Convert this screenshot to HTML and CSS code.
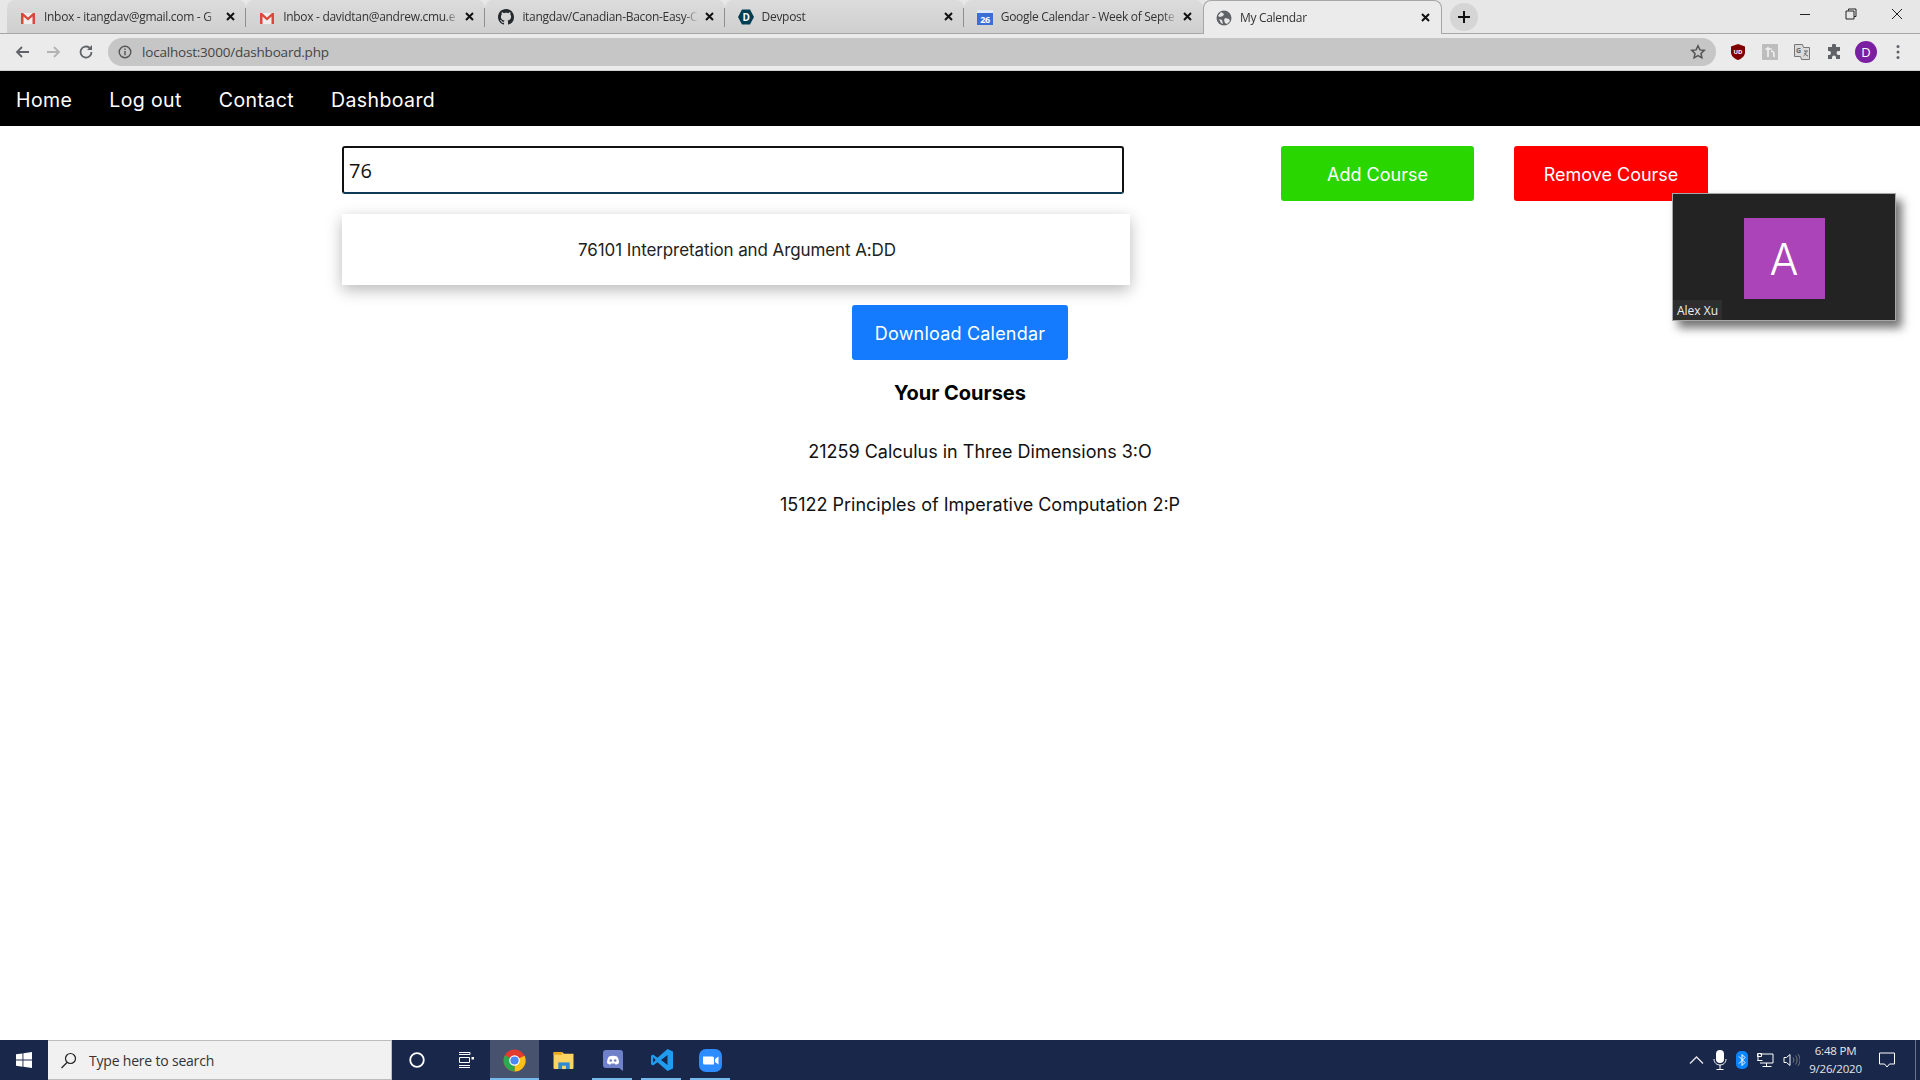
FILE: index.html
```html
<!DOCTYPE html>
<html lang="en">
<head>
<meta charset="utf-8">
<title>My Calendar</title>
<link rel="stylesheet" href="styles.css">
</head>
<body>
<header class="chrome">
  <div class="tabstrip">
    <div class="tab">
      <svg class="fav" viewBox="0 -1 16 16"><path d="M1 3h14v11H1z" fill="#eee"/><path d="M1 14V3h2l5 4.500L13 3h2v11h-2.500V6.500L8 10.500 3.500 6.500V14z" fill="#d9483b"/></svg>
      <span class="tab-title">Inbox - itangdav@gmail.com - G</span>
      <svg class="tab-x" viewBox="0 0 9 9"><path d="M1 1l7 7M8 1L1 8"/></svg>
    </div>
    <div class="tab">
      <svg class="fav" viewBox="0 -1 16 16"><path d="M1 3h14v11H1z" fill="#eee"/><path d="M1 14V3h2l5 4.500L13 3h2v11h-2.500V6.500L8 10.500 3.500 6.500V14z" fill="#d9483b"/></svg>
      <span class="tab-title">Inbox - davidtan@andrew.cmu.e</span>
      <svg class="tab-x" viewBox="0 0 9 9"><path d="M1 1l7 7M8 1L1 8"/></svg>
    </div>
    <div class="tab">
      <svg class="fav" viewBox="0 0 16 16"><path fill="#24292e" d="M8 0C3.58 0 0 3.58 0 8c0 3.54 2.29 6.53 5.47 7.59.4.07.55-.17.55-.38 0-.19-.01-.82-.01-1.49-2.01.37-2.53-.49-2.69-.94-.09-.23-.48-.94-.82-1.13-.28-.15-.68-.52-.01-.53.63-.01 1.08.58 1.23.82.72 1.21 1.87.87 2.33.66.07-.52.28-.87.51-1.07-1.78-.2-3.64-.89-3.64-3.95 0-.87.31-1.59.82-2.15-.08-.2-.36-1.02.08-2.12 0 0 .67-.21 2.2.82.64-.18 1.32-.27 2-.27.68 0 1.36.09 2 .27 1.53-1.04 2.2-.82 2.2-.82.44 1.1.16 1.92.08 2.12.51.56.82 1.27.82 2.15 0 3.07-1.87 3.75-3.65 3.95.29.25.54.73.54 1.48 0 1.07-.01 1.93-.01 2.2 0 .21.15.46.55.38A8.013 8.013 0 0016 8c0-4.42-3.58-8-8-8z"/></svg>
      <span class="tab-title">itangdav/Canadian-Bacon-Easy-C</span>
      <svg class="tab-x" viewBox="0 0 9 9"><path d="M1 1l7 7M8 1L1 8"/></svg>
    </div>
    <div class="tab">
      <svg class="fav" viewBox="0 0 16 16"><path d="M4 .5h8L16 8l-4 7.500H4L0 8z" fill="#003e54"/><text x="8" y="11.500" class="fav-text" text-anchor="middle">D</text></svg>
      <span class="tab-title">Devpost</span>
      <svg class="tab-x" viewBox="0 0 9 9"><path d="M1 1l7 7M8 1L1 8"/></svg>
    </div>
    <div class="tab tab-last">
      <svg class="fav" viewBox="0 0 16 16"><path d="M0 1h16v15H0z" fill="#3b6fd6"/><path d="M0 1h16v3H0z" fill="#dfe8f8"/><text x="8" y="14" class="fav-num" text-anchor="middle">26</text></svg>
      <span class="tab-title">Google Calendar - Week of Septe</span>
      <svg class="tab-x" viewBox="0 0 9 9"><path d="M1 1l7 7M8 1L1 8"/></svg>
    </div>
    <div class="tab tab-active">
      <svg class="fav" viewBox="0 0 16 16"><circle cx="8" cy="8" r="7.500" fill="#5f6368"/><path d="M5 2l3 2-1 2-3 1-2-1zM9 8l4 1 1 2-3 3-2-1-1-3zM3 9l3 1 1 4-2-1z" fill="#e8e8e8"/></svg>
      <span class="tab-title">My Calendar</span>
      <svg class="tab-x" viewBox="0 0 9 9"><path d="M1 1l7 7M8 1L1 8"/></svg>
    </div>
    <div class="newtab"><svg width="14" height="14" viewBox="0 0 14 14"><path d="M7 1v12M1 7h12" stroke="#111" stroke-width="2"/></svg></div>
    <div class="winctl">
      <svg class="winbtn" viewBox="0 0 12 12"><path d="M1 6.500h10" stroke="#222"/></svg>
      <svg class="winbtn" viewBox="0 0 12 12"><path d="M3.500 2.500V1H11v7.500H9M1 3h8v8H1z" stroke="#222" fill="none"/></svg>
      <svg class="winbtn" viewBox="0 0 12 12"><path d="M1 1l10 10M11 1L1 11" stroke="#222"/></svg>
    </div>
  </div>
  <div class="toolbar">
    <svg class="navicon" viewBox="0 0 16 16"><path d="M15 8H3M8 3L3 8l5 5" fill="none" stroke="#5f6368" stroke-width="1.800"/></svg>
    <svg class="navicon" viewBox="0 0 16 16"><path d="M1 8h12M8 3l5 5-5 5" fill="none" stroke="#b3b3b3" stroke-width="1.800"/></svg>
    <svg class="navicon" viewBox="0 0 16 16"><path d="M13.500 8A5.500 5.500 0 1 1 11.500 3.800" fill="none" stroke="#5f6368" stroke-width="1.800"/><path d="M14 1v5H9z" fill="#5f6368"/></svg>
    <div class="omnibox">
      <svg class="info" viewBox="0 0 14 14"><circle cx="7" cy="7" r="5.800" fill="none" stroke="#555" stroke-width="1.400"/><path d="M7 6v4.200M7 3.500v1.400" stroke="#555" stroke-width="1.400"/></svg>
      <span class="url">localhost:3000/dashboard.php</span>
      <svg class="star" viewBox="0 0 16 16"><path d="M8 1.800l1.900 4.100 4.400.5-3.300 3 .9 4.400L8 11.600l-3.900 2.200.9-4.400-3.300-3 4.400-.5z" fill="none" stroke="#555" stroke-width="1.500"/></svg>
    </div>
    <div class="exts">
      <svg class="ext" viewBox="0 0 16 16"><path d="M8 0l7 2.500V8c0 4-3 6.500-7 8-4-1.500-7-4-7-8V2.500z" fill="#800000"/><text x="8" y="9.500" class="ext-ub" text-anchor="middle">UD</text></svg>
      <svg class="ext" viewBox="0 0 16 16"><path d="M1 0h14a1 1 0 0 1 1 1v14a1 1 0 0 1-1 1H1a1 1 0 0 1-1-1V1a1 1 0 0 1 1-1z" fill="#bdbdbd"/><path d="M6 3v10M3.500 5h6M9 7c3 0 3 2 3 6" fill="none" stroke="#f3f3f3" stroke-width="1.500"/></svg>
      <svg class="ext" viewBox="0 0 16 16"><path d="M.5.500h8l1 3h6v12h-8l-1-3h-6z" fill="#dadada" stroke="#777"/><text x="4.500" y="9" class="ext-g" text-anchor="middle">G</text><path d="M10 7h4M12 7v1c0 2-1 3-2.500 4M10.500 9c.5 1.500 2 2.500 3.500 3" fill="none" stroke="#666"/></svg>
      <svg class="ext" viewBox="0 0 16 16"><path d="M6 1.500a2 2 0 0 1 4 0V3h4v4h-1.500a2 2 0 0 0 0 4H14v4h-4v-1.500a2 2 0 0 0-4 0V15H2v-4h1a2 2 0 0 0 0-4H2V3h4z" fill="#5f6368"/></svg>
      <div class="profile">D</div>
      <svg class="ext ext-menu" viewBox="0 0 16 16"><circle cx="8" cy="2.500" r="1.500" fill="#5f6368"/><circle cx="8" cy="8" r="1.500" fill="#5f6368"/><circle cx="8" cy="13.500" r="1.500" fill="#5f6368"/></svg>
    </div>
  </div>
</header>

<nav class="sitenav">
  <a class="navlink">Home</a>
  <a class="navlink">Log out</a>
  <a class="navlink">Contact</a>
  <a class="navlink">Dashboard</a>
</nav>

<main class="page">
  <section class="search-row">
    <div class="search-col">
      <div class="search-input">76</div>
      <div class="suggest"><span class="suggest-text">76101 Interpretation and Argument A:DD</span></div>
    </div>
    <div class="btn btn-add">Add Course</div>
    <div class="btn btn-remove">Remove Course</div>
  </section>
  <div class="download-row"><div class="btn btn-download">Download Calendar</div></div>
  <h2 class="courses-title">Your Courses</h2>
  <ul class="courses">
    <li>21259 Calculus in Three Dimensions 3:O</li>
    <li>15122 Principles of Imperative Computation 2:P</li>
  </ul>
</main>

<aside class="zoomwin">
  <div class="avatar">A</div>
  <div class="zoomname">Alex Xu</div>
</aside>

<footer class="taskbar">
  <div class="tb-start"><svg width="16" height="16" viewBox="0 0 16 16"><path d="M0 2.300l6.500-.9v6.200H0zM7.400 1.300L16 0v7.600H7.400zM0 8.500h6.500v6.200L0 13.700zM7.400 8.500H16V16l-8.600-1.200z" fill="#fff"/></svg></div>
  <div class="tb-search">
    <svg width="17" height="17" viewBox="0 0 17 17"><circle cx="10.500" cy="6.500" r="5" fill="none" stroke="#222" stroke-width="1.200"/><path d="M7 10.500L1.500 16" stroke="#222" stroke-width="1.200"/></svg>
    <span>Type here to search</span>
  </div>
  <div class="tb-icon"><svg width="16" height="16" viewBox="0 0 16 16"><circle cx="8" cy="8" r="6.800" fill="none" stroke="#fff" stroke-width="1.800"/></svg></div>
  <div class="tb-icon"><svg width="16" height="16" viewBox="0 0 16 16"><path d="M1 .500h11M12 .500v2M1 2.500h11M1 13.500h11M1 15.500h11M1.500 5.500h10v5h-10z" fill="none" stroke="#fff"/><path d="M13.500 5h2.500v2.500h-2.500z" fill="#fff"/></svg></div>
  <div class="tb-icon tb-active"><svg width="23" height="23" viewBox="0 0 24 24"><circle cx="12" cy="12" r="11.500" fill="#e33b2e"/><path d="M12 12L22.500 7A11.500 11.500 0 0 1 12 23.500z" fill="#fbc116"/><path d="M12 12L12 23.500A11.500 11.500 0 0 1 2 6.500z" fill="#2da94f"/><circle cx="12" cy="12" r="5.500" fill="#fff"/><circle cx="12" cy="12" r="4.300" fill="#4a89f3"/></svg></div>
  <div class="tb-icon"><svg width="22" height="19" viewBox="0 0 22 20"><path d="M0 2a1 1 0 0 1 1-1h8l2 2h10v15a1 1 0 0 1-1 1H1a1 1 0 0 1-1-1z" fill="#fcd462"/><path d="M0 1h9v3H0z" fill="#e9a81f"/><path d="M5 12h12v7H5z" fill="#2d8ad3"/><path d="M9 15.500h4v3.500H9z" fill="#fcd462"/></svg></div>
  <div class="tb-icon tb-open"><svg width="20" height="21" viewBox="0 0 20 21"><path d="M3 0h14a3 3 0 0 1 3 3v18l-4-3H3a3 3 0 0 1-3-3V3a3 3 0 0 1 3-3z" fill="#6f82c9"/><path d="M4 13c0-3 1-5.500 2-6.500 2.500-1 5.500-1 8 0 1 1 2 3.500 2 6.500-1 1-2.500 1.500-3.500 1.500l-.7-1H8.200l-.7 1C6.500 14.500 5 14 4 13z" fill="#fff"/><circle cx="7.800" cy="10.500" r="1.300" fill="#6f82c9"/><circle cx="12.200" cy="10.500" r="1.300" fill="#6f82c9"/></svg></div>
  <div class="tb-icon tb-open"><svg width="24" height="24" viewBox="0 0 24 24"><path fill="#1f9cf0" fill-rule="evenodd" d="M17.500 1L23 3.600v16.800L17.500 23 7.500 14.300 3 17.500 1 16.300V7.700l2-1.200 4.500 3.200zM17.500 7L11 12l6.500 5zM3 9.300v5.400L5.700 12z"/></svg></div>
  <div class="tb-icon tb-open"><svg width="23" height="23" viewBox="0 0 23 23"><rect width="23" height="23" rx="7" fill="#2d8cff"/><path d="M4 7.500h9.500A1.500 1.500 0 0 1 15 9v6.500H5.500A1.500 1.500 0 0 1 4 14zM16 10l3.500-2.500v8L16 13z" fill="#fff"/></svg></div>
  <div class="tb-tray">
    <svg class="tray-i" width="15" height="8" viewBox="0 0 15 8"><path d="M1 7.500l6.500-6.500L14 7.500" fill="none" stroke="#e6e6e6" stroke-width="1.300"/></svg>
    <svg class="tray-i" width="14" height="20" viewBox="0 0 14 20"><rect x="3" y="0" width="8" height="13" rx="4" fill="#fff"/><path d="M1 9c0 4 3 6 6 6s6-2 6-6M7 15v4M3.500 19.500h7" fill="none" stroke="#fff"/></svg>
    <svg class="tray-i" width="12" height="18" viewBox="0 0 12 18"><rect width="12" height="18" rx="5" fill="#0a84ff"/><path d="M3 5.500l6 6-3 3v-11l3 3-6 6" fill="none" stroke="#fff"/></svg>
    <svg class="tray-i" width="17" height="14" viewBox="0 0 17 14"><path d="M3 1h13v9H3M9.500 10v3M5.500 13.500h9M1 1v7M.5.500h4v3h-4zM.5 7.500h5" fill="none" stroke="#fff"/></svg>
    <svg class="tray-i" width="17" height="14" viewBox="0 0 17 14"><path d="M1 4.500h2.500L7 1.500v11l-3.500-3H1z" fill="none" stroke="#fff"/><path d="M10 4.500a4 4 0 0 1 0 5M12.500 2.500a7 7 0 0 1 0 9M15 1a9.500 9.500 0 0 1 0 12" fill="none" stroke="#777"/></svg>
    <div class="clock"><span>6:48 PM</span><span>9/26/2020</span></div>
    <svg class="tray-note" width="16" height="16" viewBox="0 0 16 16"><path d="M.5 1h15v11h-5L8 15l-2.500-3h-5z" fill="none" stroke="#fff"/></svg>
    <div class="show-desktop"></div>
  </div>
</footer>
</body>
</html>
```

FILE: styles.css
```css
* { box-sizing: border-box; }
html, body { margin: 0; height: 100%; }
body {
  position: relative;
  width: 1920px;
  height: 1080px;
  overflow: hidden;
  display: flex;
  flex-direction: column;
  background: #fff;
  font-family: Inter, "Liberation Sans", sans-serif;
  color: #111;
}

/* browser chrome */
.chrome { flex: none; font-family: "Open Sans", "Liberation Sans", sans-serif; }
.tabstrip {
  height: 34px;
  display: flex;
  align-items: stretch;
  padding-left: 7px;
  background: #e7e7e7;
  border-bottom: 1px solid #a6a6a6;
}
.tab {
  position: relative;
  width: 239.200px;
  flex: none;
  display: flex;
  align-items: center;
  padding: 0 8px 0 13px;
  background: linear-gradient(#dcdcdc, #cfcfcf);
  border-radius: 8px 8px 0 0;
  font-size: 12px;
  letter-spacing: -0.3px;
  color: #333;
}
.tab::after {
  content: "";
  position: absolute;
  right: 0;
  top: 8px;
  height: 19px;
  width: 1px;
  background: #8f8f8f;
}
.tab-last::after, .tab-active::after { display: none; }
.tab-active {
  background: #ebebeb;
  border: 1px solid #a6a6a6;
  border-bottom: 0;
  margin-bottom: -1px;
  padding-left: 12px;
}
.fav { width: 16px; height: 16px; flex: none; margin-right: 8px; }
.fav-text { font: 700 10px "Open Sans", sans-serif; fill: #fff; }
.fav-num { font: 700 9px "Open Sans", sans-serif; fill: #fff; }
.tab-title {
  flex: 1;
  min-width: 0;
  white-space: nowrap;
  -webkit-mask-image: linear-gradient(to right, #000 162px, transparent 176px);
  mask-image: linear-gradient(to right, #000 162px, transparent 176px);
}
.tab-x { flex: none; width: 9px; height: 9px; margin: 0 3px 0 6px; fill: none; stroke: #111; stroke-width: 2; }
.newtab {
  width: 28px;
  height: 28px;
  margin: 3px 0 0 8px;
  border-radius: 50%;
  background: #d5d5d5;
  display: flex;
  align-items: center;
  justify-content: center;
}
.winctl { margin-left: auto; display: flex; align-items: flex-start; padding: 8px 17px 0 0; gap: 34px; }
.winbtn { width: 12px; height: 12px; }

.toolbar {
  height: 37px;
  display: flex;
  align-items: center;
  padding: 0 8px 0 14px;
  background: #ebebeb;
  border-bottom: 1px solid #cfcfcf;
}
.navicon { width: 16px; height: 16px; margin-right: 16px; flex: none; }
.omnibox {
  width: 1608px;
  height: 28px;
  margin-left: -2px;
  flex: none;
  display: flex;
  align-items: center;
  padding: 0 14px 0 10px;
  background: #c6c6c6;
  border-radius: 14px;
}
.info { width: 14px; height: 14px; margin-right: 10px; }
.url { font-size: 13.500px; letter-spacing: -0.2px; color: #444; }
.star { width: 16px; height: 16px; margin-left: auto; margin-right: -4px; }
.exts { display: flex; align-items: center; margin-left: 14px; gap: 16px; }
.ext { width: 16px; height: 16px; flex: none; }
.ext-ub { font: 700 6px "Open Sans", sans-serif; fill: #fff; }
.ext-g { font: 700 7px "Open Sans", sans-serif; fill: #666; }
.profile {
  width: 22px;
  height: 22px;
  margin: 0 -3px;
  border-radius: 50%;
  background: #7b1fa2;
  color: #fff;
  font-size: 13px;
  display: flex;
  align-items: center;
  justify-content: center;
}

/* site nav */
.sitenav {
  flex: none;
  height: 55px;
  display: flex;
  align-items: center;
  gap: 37px;
  padding: 2px 0 0 16px;
  background: #000;
}
.navlink { color: #fff; font-size: 19.500px; font-weight: 400; letter-spacing: .4px; }

/* page */
.page { flex: 1; min-height: 0; }
.search-row { display: flex; align-items: flex-start; padding: 20px 0 0 342px; }
.search-col { width: 788px; flex: none; }
.search-input {
  width: 782px;
  height: 48px;
  padding-left: 5px;
  display: flex;
  align-items: center;
  border: 2px solid #111;
  border-bottom-color: #0c3a57;
  border-radius: 3px;
  font: 20px "Open Sans", sans-serif;
}
.suggest {
  height: 71px;
  margin-top: 20px;
  display: flex;
  align-items: center;
  justify-content: center;
  background: #fff;
  box-shadow: 0 5px 15px rgba(0, 0, 0, .28);
}
.suggest-text { font-size: 17px; letter-spacing: -0.1px; color: #222; padding-left: 2px; }
.btn {
  height: 55px;
  padding-top: 2px;
  display: flex;
  align-items: center;
  justify-content: center;
  border-radius: 3px;
  color: #fff;
  font-size: 18px;
}
.btn-add { width: 193px; margin-left: 151px; background: #2ad600; }
.btn-remove { width: 194px; margin-left: 40px; background: #ff0000; }
.download-row { display: flex; justify-content: center; margin-top: 20px; }
.btn-download { width: 216px; background: #147bff; letter-spacing: .2px; }
.courses-title { margin: 19px 0 0; font-size: 20px; font-weight: 700; line-height: 28px; text-align: center; color: #000; }
.courses { margin: 31px 0 0; padding: 0 0 0 40px; list-style: none; text-align: center; font-size: 18px; line-height: 28px; }
.courses li + li { margin-top: 25px; }

/* floating zoom window */
.zoomwin {
  position: absolute;
  left: 1672px;
  top: 193px;
  width: 224px;
  height: 128px;
  display: flex;
  justify-content: center;
  padding-top: 24px;
  background: #232323;
  border: 1px solid #a8a8a8;
  box-shadow: 6px 7px 9px rgba(0, 0, 0, .55);
}
.avatar {
  width: 81px;
  height: 81px;
  display: flex;
  align-items: center;
  justify-content: center;
  background: #ab44b8;
  color: #fff;
  font-size: 43px;
  font-weight: 300;
}
.zoomname {
  position: absolute;
  left: 0;
  bottom: 0;
  height: 20px;
  padding: 0 4px;
  display: flex;
  align-items: center;
  background: #2e2e2e;
  color: #eee;
  font: 12px "Open Sans", sans-serif;
}

/* taskbar */
.taskbar {
  flex: none;
  height: 40px;
  display: flex;
  background: #19274a;
  font-family: "Open Sans", "Liberation Sans", sans-serif;
}
.tb-start { width: 48px; display: flex; align-items: center; justify-content: center; }
.tb-search {
  width: 344px;
  display: flex;
  align-items: center;
  gap: 12px;
  padding-left: 12px;
  background: #f1f1f1;
  border: 1px solid #bdbdbd;
  border-width: 1px 1px 1px 0;
  font-size: 14px;
  letter-spacing: -0.2px;
  color: #333;
}
.tb-icon {
  position: relative;
  width: 49px;
  flex: none;
  display: flex;
  align-items: center;
  justify-content: center;
}
.tb-active { background: #47526e; }
.tb-active::after, .tb-open::after {
  content: "";
  position: absolute;
  left: 4px;
  right: 5px;
  bottom: 0;
  height: 2px;
  background: #76b9ed;
}
.tb-active::after { left: 0; right: 0; }
.tb-tray { margin-left: auto; display: flex; align-items: center; color: #e6e6e6; }
.tray-i { margin-right: 9px; }
.clock {
  width: 54px;
  display: flex;
  flex-direction: column;
  align-items: center;
  font-size: 11.500px;
  line-height: 18px;
  letter-spacing: -0.2px;
}
.tray-note { margin-left: 16.500px; }
.show-desktop { width: 1px; height: 40px; margin-left: 20px; margin-right: 4px; background: #6b7488; }
```
